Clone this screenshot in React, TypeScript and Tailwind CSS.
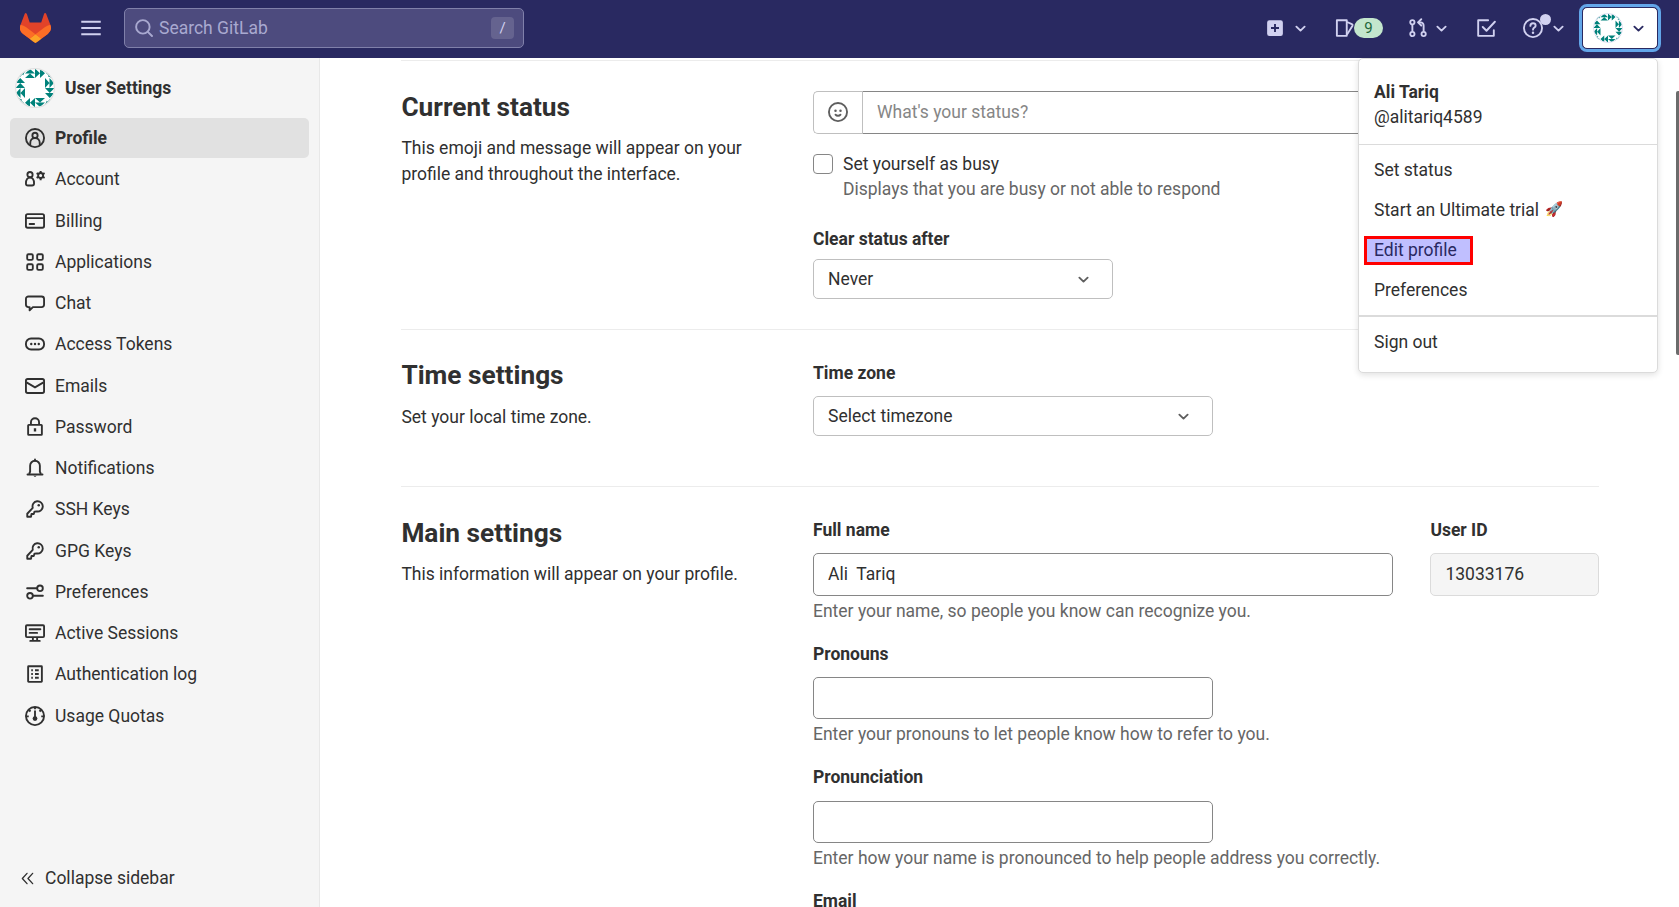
import type { ReactNode } from "react";

type IconProps = { children: ReactNode; className?: string; size?: number };

function Icon({ children, className = "", size = 20 }: IconProps) {
  return (
    <svg
      width={size}
      height={size}
      viewBox="0 0 16 16"
      fill="none"
      stroke="currentColor"
      strokeWidth="1.5"
      className={`shrink-0 ${className}`}
    >
      {children}
    </svg>
  );
}

function Chevron({ className = "" }: { className?: string }) {
  return (
    <Icon size={15} className={className}>
      <path d="M3.6 6 8 10.2 12.4 6" strokeWidth="2" strokeLinecap="round" strokeLinejoin="round" />
    </Icon>
  );
}

function Identicon({ size, ring }: { size: number; ring: string }) {
  const side = (
    <>
      <path d="M10 5.500 15 1l5 4.500zM10 10l5-4.500 5 4.500z" />
      <path d="M20 .5l5 4.750-5 4.750zM25 .5l5 4.750-5 4.750z" />
      <path d="M0 0h10v3.200L8.200 7.200 6.800 6 6.200 8 2.800 10H0z" />
    </>
  );
  return (
    <svg width={size} height={size} viewBox="0 0 40 40" className="shrink-0">
      <clipPath id={`avatar-${size}`}>
        <circle cx="20" cy="20" r="19.5" />
      </clipPath>
      <circle cx="20" cy="20" r="20" fill="#fff" />
      <g clipPath={`url(#avatar-${size})`} fill="#00827b">
        <g>{side}</g>
        <g transform="rotate(90 20 20)">{side}</g>
        <g transform="rotate(180 20 20)">{side}</g>
        <g transform="rotate(270 20 20)">{side}</g>
      </g>
      <circle cx="20" cy="20" r="19.4" fill="none" stroke={ring} strokeWidth="1.2" />
    </svg>
  );
}

function Logo() {
  return (
    <svg width="31" height="30" viewBox="0 0 25 24">
      <path fill="#E24329" d="m24.507 9.5-.034-.09L21.082.562a.896.896 0 0 0-1.694.091l-2.29 7.01H7.825L5.535.653a.898.898 0 0 0-1.694-.09L.451 9.411.416 9.5a6.297 6.297 0 0 0 2.09 7.278l.012.01.03.022 5.16 3.867 2.56 1.935 1.554 1.176a1.051 1.051 0 0 0 1.268 0l1.555-1.176 2.56-1.935 5.197-3.89.014-.01A6.297 6.297 0 0 0 24.507 9.5Z" />
      <path fill="#FC6D26" d="m24.507 9.5-.034-.09a11.44 11.44 0 0 0-4.56 2.051l-7.447 5.632 4.742 3.584 5.197-3.89.014-.01A6.297 6.297 0 0 0 24.507 9.5Z" />
      <path fill="#FCA326" d="m7.707 20.677 2.56 1.935 1.555 1.176a1.051 1.051 0 0 0 1.268 0l1.555-1.176 2.56-1.935-4.743-3.584-4.755 3.584Z" />
      <path fill="#FC6D26" d="M5.01 11.461a11.43 11.43 0 0 0-4.56-2.05L.416 9.5a6.297 6.297 0 0 0 2.09 7.278l.012.01.03.022 5.16 3.867 4.745-3.584-7.444-5.632Z" />
    </svg>
  );
}

const keyIcon = (
  <>
    <path d="M6.2 7.1A4.1 4.1 0 1 1 9.2 9.9L7.6 10.1 7 12H5.2l-.4 2.2H1.8v-2.4z" strokeLinejoin="round" />
    <circle cx="11" cy="5" r="1" fill="currentColor" stroke="none" />
  </>
);

const navItems: { label: string; icon: ReactNode }[] = [
  {
    label: "Profile",
    icon: (
      <>
        <circle cx="8" cy="8" r="7.25" />
        <circle cx="8" cy="5.9" r="2.1" />
        <path d="M4.2 13.8V12c0-2.3 1.5-4 3.8-4s3.8 1.7 3.8 4v1.8" />
      </>
    ),
  },
  {
    label: "Account",
    icon: (
      <>
        <circle cx="4" cy="4.5" r="2.1" />
        <path d="M.75 11.6C.75 8.8 1.9 6.9 4 6.9s3.25 1.9 3.25 4.7c0 1.2-.6 1.6-1.6 1.6h-3.3c-1 0-1.6-.4-1.6-1.6z" />
        <circle cx="12.5" cy="5.2" r="2" />
        <path d="M12.5 1.5v1.7M12.5 7.2v1.7M9.3 3.3l1.5.9M14.2 6.2l1.5.9M9.3 7.1l1.5-.9M14.2 4.2l1.5-.9" strokeWidth="1.6" />
      </>
    ),
  },
  {
    label: "Billing",
    icon: (
      <>
        <rect x=".75" y="2.5" width="14.5" height="10.9" rx="1.4" />
        <path d="M1 5.7h14M3.7 10.4h3.6" strokeLinecap="round" />
      </>
    ),
  },
  {
    label: "Applications",
    icon: (
      <>
        <rect x="1.75" y="1.75" width="4.5" height="4.5" rx="1" />
        <rect x="9.75" y="1.75" width="4.5" height="4.5" rx="1" />
        <rect x="1.75" y="9.75" width="4.5" height="4.5" rx="1" />
        <rect x="9.75" y="9.75" width="4.5" height="4.5" rx="1" />
      </>
    ),
  },
  {
    label: "Chat",
    icon: (
      <path d="M3.7 11.25h-.95a2 2 0 0 1-2-2v-4.5a2 2 0 0 1 2-2h10.5a2 2 0 0 1 2 2v4.5a2 2 0 0 1-2 2H6.3L3.7 13.9z" strokeLinejoin="round" />
    ),
  },
  {
    label: "Access Tokens",
    icon: (
      <>
        <rect x=".75" y="3.6" width="14.5" height="8.8" rx="4.1" />
        <path d="M5 8h.01M8 8h.01M11 8h.01" strokeWidth="1.9" strokeLinecap="round" />
      </>
    ),
  },
  {
    label: "Emails",
    icon: (
      <>
        <rect x=".75" y="2.4" width="14.5" height="11.2" rx="1.4" />
        <path d="M1.2 5.1 8 9.1l6.8-4" />
      </>
    ),
  },
  {
    label: "Password",
    icon: (
      <>
        <rect x="2.5" y="6.25" width="11" height="8" rx=".5" />
        <path d="M4.75 6V4.2a3.25 3.25 0 0 1 6.5 0V6" />
        <path d="M8 9v2.6" strokeWidth="1.9" />
      </>
    ),
  },
  {
    label: "Notifications",
    icon: (
      <>
        <path d="M2 13.2h12M3.6 13V12l.5-1V6.2A3.9 3.9 0 0 1 8 2.2a3.9 3.9 0 0 1 3.9 4V11l.5 1v1" strokeLinecap="round" />
        <path d="M8 1.2v1" strokeLinecap="round" />
        <path d="M6.6 14.2h2.8l-1.4.9z" fill="currentColor" stroke="none" />
      </>
    ),
  },
  { label: "SSH Keys", icon: keyIcon },
  { label: "GPG Keys", icon: keyIcon },
  {
    label: "Preferences",
    icon: (
      <>
        <circle cx="12" cy="5" r="2.25" />
        <circle cx="4" cy="11" r="2.25" />
        <path d="M1.7 5h8M6.3 11h8" strokeLinecap="round" />
      </>
    ),
  },
  {
    label: "Active Sessions",
    icon: (
      <>
        <rect x=".75" y="1.75" width="14.5" height="9.5" rx=".8" />
        <path d="M3.7 5h8.6M3.7 7.9h6M4.2 14.3h7.6" strokeLinecap="round" />
        <path d="M6.3 11.5v2.5M9.7 11.5v2.5" />
      </>
    ),
  },
  {
    label: "Authentication log",
    icon: (
      <>
        <rect x="2.5" y="1.75" width="11" height="12.5" rx=".4" />
        <path d="M5 5h1.3M8 5h3M5 8h1.3M8 8h3M5 11h1.3M8 11h3" />
      </>
    ),
  },
  {
    label: "Usage Quotas",
    icon: (
      <>
        <circle cx="8" cy="8" r="7.25" />
        <circle cx="8" cy="10" r="1.9" fill="currentColor" stroke="none" />
        <path d="M8 4.2V10" strokeLinecap="round" />
        <path d="M8 1v1.6M1 8.3h2M13 8.3h2M3.2 3.2l1.2 1.2M12.8 3.2l-1.2 1.2" />
      </>
    ),
  },
];

function Header() {
  return (
    <header className="flex h-[58px] shrink-0 items-center bg-[#292961] pr-[18px] pl-5 text-[#d1d1f0]">
      <div className="-mt-0.5 flex w-full items-center">
        <Logo />
        <Icon className="ml-[30px]">
          <path d="M.2 3h15.6M.2 8h15.6M.2 13h15.6" strokeWidth="1.6" />
        </Icon>
        <div className="ml-[23px] flex h-10 w-[400px] items-center rounded-[5px] border border-[#8080aa] bg-[#4d4b7e] pr-[9px] pl-2.5 text-[#a9a9d0]">
          <Icon size={18}>
            <circle cx="7" cy="7" r="6" strokeWidth="1.7" />
            <path d="m11.4 11.4 3.7 3.7" strokeLinecap="round" strokeWidth="1.7" />
          </Icon>
          <span className="ml-1.5 flex-1">Search GitLab</span>
          <span className="flex h-[22px] w-[23px] items-center justify-center rounded-[4px] bg-[#65638f] text-[15px] text-[#d1d1f0]">/</span>
        </div>
        <div className="ml-auto flex items-center">
          <svg width="20" height="20" viewBox="0 0 16 16">
            <path fillRule="evenodd" fill="currentColor" d="M3.5 1.7h9a1.8 1.8 0 0 1 1.8 1.8v9a1.8 1.8 0 0 1-1.8 1.8h-9a1.8 1.8 0 0 1-1.8-1.8v-9a1.8 1.8 0 0 1 1.8-1.8zM7.25 4.8v2.45H4.8v1.5h2.45v2.45h1.5V8.75h2.45v-1.5H8.75V4.8z" />
          </svg>
          <Chevron className="ml-[7.5px]" />
          <Icon className="ml-[27.5px]">
            <path d="M1.5 1.75h7.9v12.5H1.5z" strokeLinejoin="round" />
            <path d="m9.6 3.2 3.9 1.7c.6.3.8.7.5 1.3L9.6 13.3" />
          </Icon>
          <span className="-ml-px flex h-5 w-[29px] items-center justify-center rounded-full bg-[#c3e6cd] text-[15px] text-[#24663b]">9</span>
          <Icon className="ml-[25px]">
            <circle cx="3.5" cy="3.4" r="1.7" />
            <circle cx="3.5" cy="12.8" r="1.7" />
            <circle cx="12.5" cy="12.8" r="1.7" />
            <path d="M3.5 5.2v5.8M12.5 11V6.2c0-1.5-.8-2.7-2.5-2.7H8.4" />
            <path d="M10.6 1 8 3.5 10.6 6" strokeLinecap="round" strokeLinejoin="round" />
          </Icon>
          <Chevron className="ml-[5.5px]" />
          <Icon className="ml-[27.5px]">
            <path d="M9.7 1.75H1.75v12.5h12.5V9.7" strokeLinejoin="round" strokeLinecap="round" />
            <path d="m5.4 7.2 3 3 6.7-7.2" strokeLinecap="round" strokeLinejoin="round" />
          </Icon>
          <div className="relative ml-[27px]">
            <Icon>
              <circle cx="8" cy="8" r="7.25" />
              <path d="M5.9 6.3c0-1.3.9-2.1 2.1-2.1s2.1.8 2.1 1.9c0 1.6-2.1 1.5-2.1 3.2" strokeLinecap="round" />
              <circle cx="8" cy="11.7" r="1" fill="currentColor" stroke="none" />
            </Icon>
            <span className="absolute -top-1 left-[17px] size-[11px] rounded-full bg-[#d1d1f0]" />
          </div>
          <Chevron className="ml-[8px]" />
          <div className="ml-[13px] flex h-12 w-[82px] items-center rounded-[8px] border-[3px] border-[#63a6e9]">
            <div className="flex h-[42px] w-full items-center rounded-[5px] border border-[#292961] bg-white pl-2.5 text-[#292961]">
              <Identicon size={30} ring="#dcdcf2" />
              <Chevron className="ml-[7.5px]" />
            </div>
          </div>
        </div>
      </div>
    </header>
  );
}

function Sidebar() {
  return (
    <aside className="flex w-[320px] shrink-0 flex-col border-r border-[#e8e8e8] bg-[#f5f5f5]">
      <div className="flex h-[60px] items-center pl-[15px] font-bold">
        <Identicon size={40} ring="#e0e0e0" />
        <span className="ml-2.5">User Settings</span>
      </div>
      <nav className="flex flex-col gap-[1.25px] pr-2.5 pl-2.5">
        {navItems.map((item, i) => (
          <a
            key={item.label}
            className={`flex h-10 items-center rounded-[5px] pl-[15px] ${i === 0 ? "bg-[#e1e1e1] font-bold" : ""}`}
          >
            <Icon>{item.icon}</Icon>
            <span className="ml-2.5 pt-[0.38px]">{item.label}</span>
          </a>
        ))}
      </nav>
      <div className="mt-auto flex h-[57.5px] items-center pl-5">
        <Icon size={15}>
          <path d="M7.5 2.5 2.5 8l5 5.5M13.5 2.5l-5 5.5 5 5.5" strokeLinecap="round" strokeLinejoin="round" strokeWidth="1.4" />
        </Icon>
        <span className="ml-2.5">Collapse sidebar</span>
      </div>
    </aside>
  );
}

type SectionProps = { title: string; text: string; className?: string; titleClass?: string; children: ReactNode };

function Section({ title, text, className = "", titleClass = "mb-[11px]", children }: SectionProps) {
  return (
    <section className={`flex shrink-0 border-t border-[#ececec] pt-[30px] ${className}`}>
      <div className="w-[412px] shrink-0 pr-[50px] pl-[0.4px]">
        <h4 className={`text-[26.25px] leading-[33px] font-bold ${titleClass}`}>{title}</h4>
        <p>{text}</p>
      </div>
      <div className="flex-1">{children}</div>
    </section>
  );
}

function Select({ value, className = "" }: { value: string; className?: string }) {
  return (
    <div className={`flex h-10 items-center justify-between rounded-[5px] border border-[#bfbfbf] pr-[21.5px] pl-[14px] ${className}`}>
      <span>{value}</span>
      <Chevron className="text-[#5e5e5e]" />
    </div>
  );
}

function Field({ label, help }: { label: string; help: string }) {
  return (
    <div className="mb-[17px]">
      <label className="block font-bold">{label}</label>
      <div className="mt-[10px] h-[42.5px] w-[400px] rounded-[5px] border border-[#868686]" />
      <p className="mt-[1.75px] text-[#666]">{help}</p>
    </div>
  );
}

function UserMenu() {
  return (
    <div className="absolute top-[58px] left-[1358px] flex h-[315px] w-[300px] flex-col rounded-[5px] border border-[#dbdbdb] bg-white shadow-[0_2px_6px_rgba(0,0,0,0.12)]">
      <div className="h-[86px] border-b border-[#dbdbdb] pt-[21px] pl-[15px] leading-[25px]">
        <div className="font-bold">Ali Tariq</div>
        <div>@alitariq4589</div>
      </div>
      <div className="flex h-[172px] flex-col border-b-2 border-[#dbdbdb] pt-[5px]">
        <a className="flex h-10 items-center pl-[15px]">Set status</a>
        <a className="flex h-10 items-center pl-[15px] whitespace-pre">Start an Ultimate trial <span className="ml-[2px] text-[14.5px]">🚀</span></a>
        <a className="flex h-10 items-center pt-px pl-[5px]">
          <span className="flex h-[29px] w-[109px] items-center border-[3px] border-[#ff0000] bg-[#c0bfff] pl-[7px] text-[#292961]">Edit profile</span>
        </a>
        <a className="flex h-10 items-center pl-[15px]">Preferences</a>
      </div>
      <a className="mt-[5px] flex h-10 items-center pl-[15px]">Sign out</a>
    </div>
  );
}

export default function App() {
  return (
    <div className="relative flex h-[907px] w-[1679px] flex-col overflow-hidden bg-white font-[Roboto,'Noto_Sans',sans-serif] text-[17.5px] leading-[26.25px] text-[#303030]">
      <Header />
      <div className="flex min-h-0 flex-1">
        <Sidebar />
        <main className="flex flex-1 flex-col overflow-hidden pt-0.5 pr-20 pl-[81px]">
          <Section title="Current status" text="This emoji and message will appear on your profile and throughout the interface." className="h-[269px]">
            <div className="flex h-[42.5px] w-full">
              <div className="flex w-[49px] items-center justify-center rounded-l-[5px] border border-r-0 border-[#bfbfbf] pb-px text-[#5e5e5e]">
                <Icon>
                  <circle cx="8" cy="8" r="7.25" />
                  <circle cx="6" cy="7" r="1" fill="currentColor" stroke="none" />
                  <circle cx="10" cy="7" r="1" fill="currentColor" stroke="none" />
                  <path d="M6 10.1c.9 1.2 3.1 1.2 4 0" strokeLinecap="round" />
                </Icon>
              </div>
              <div className="flex flex-1 items-center rounded-r-[5px] border border-[#868686] border-l-[#bfbfbf] pl-[14px] text-[#868686]">What's your status?</div>
            </div>
            <div className="mt-[17.5px] flex">
              <div className="mt-[3px] size-5 shrink-0 rounded-[4px] border border-[#868686]" />
              <div className="ml-2.5 pt-px leading-[25px]">
                <div>Set yourself as busy</div>
                <div className="text-[#666]">Displays that you are busy or not able to respond</div>
              </div>
            </div>
            <div className="mt-[24px] mb-[7px] font-bold">Clear status after</div>
            <Select value="Never" className="w-[300px]" />
          </Section>
          <Section title="Time settings" text="Set your local time zone." className="h-[157px]" titleClass="-mt-px mb-3">
            <div className="mb-[10px] font-bold">Time zone</div>
            <Select value="Select timezone" className="w-[400px]" />
          </Section>
          <Section title="Main settings" text="This information will appear on your profile.">
            <div className="mb-[16.75px] flex justify-between">
              <div>
                <label className="block font-bold">Full name</label>
                <div className="mt-[10px] flex h-[42.5px] w-[580px] items-center rounded-[5px] border border-[#868686] pl-[14px] whitespace-pre">Ali  Tariq</div>
                <p className="mt-[1.75px] text-[#666]">Enter your name, so people you know can recognize you.</p>
              </div>
              <div>
                <label className="block pl-[0.4px] font-bold">User ID</label>
                <div className="mt-[10px] flex h-[42.5px] w-[169px] items-center rounded-[5px] border border-[#dbdbdb] bg-[#f5f5f5] pl-[14.4px]">13033176</div>
              </div>
            </div>
            <Field label="Pronouns" help="Enter your pronouns to let people know how to refer to you." />
            <Field label="Pronunciation" help="Enter how your name is pronounced to help people address you correctly." />
            <div className="font-bold">Email</div>
          </Section>
        </main>
      </div>
      <div className="absolute top-[91px] right-0 h-[264px] w-[3px] rounded-l-[2px] bg-[#6b6b6b]" />
      <UserMenu />
    </div>
  );
}
